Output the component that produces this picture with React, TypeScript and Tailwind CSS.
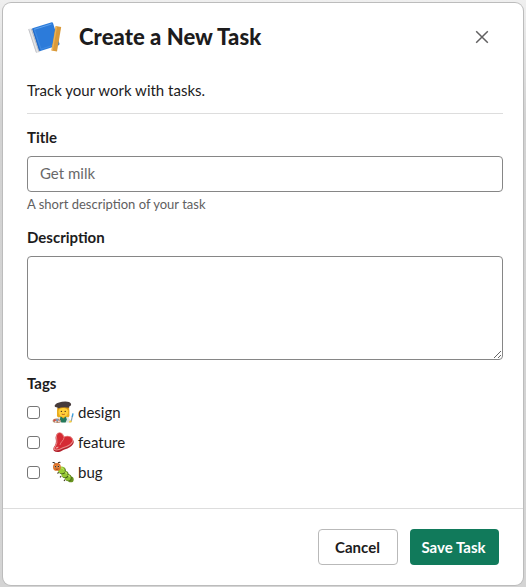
import type { ReactNode } from "react";

function NotebookIcon() {
  return (
    <svg viewBox="0 0 36 36" className="h-9 w-9 shrink-0">
      <path d="M1.4 10 L6 9 L13.6 32 L13 33 L9.6 34 Q9 33.8 8.6 32.6 Z" fill="#e2e3e6" />
      <path d="M1.7 10.2 L9.4 33.6" stroke="#bfc1c5" strokeWidth="0.9" />
      <path d="M4.4 10 L12 32.8" stroke="#a9acb3" strokeWidth="0.8" />
      <path d="M5.4 9.3 L24.8 3.3 Q25.7 3.2 26 4.1 L32.5 24.8 Q32.5 25.9 31.6 26.2 L13.4 32.1 Q12.5 32.2 12.1 31.2 Z" fill="#2c7bda" />
      <path d="M7.2 10.4 L24.6 5" fill="none" stroke="#66a7ee" strokeWidth="0.9" />
      <path d="M7.4 10.5 L14 30.2 L29.4 25.2" fill="none" stroke="#4a93e6" strokeWidth="0.6" />
      <path d="M5.6 9.8 L12.7 31.6" stroke="#1d61bd" strokeWidth="0.9" />
      <path d="M28.6 6.9 L34.2 7.9 L30 32.4 L24.4 31.6 Z" fill="#d99a3b" />
      <path d="M29.5 7.4 L25.3 31.4" stroke="#edb357" strokeWidth="1.2" />
    </svg>
  );
}

function ArtistIcon() {
  return (
    <svg viewBox="0 0 22 22" className="h-[22px] w-[22px]">
      <path d="M5.6 6 H17 Q17.6 10 17.4 13 Q18 15.6 16.4 16.4 H6 Q4.4 15.6 5 13 Q4.6 9 5.6 6 Z" fill="#e9ab1e" />
      <path d="M3.6 21.6 Q4 17.2 8 16 H14.6 Q18.4 17 19 21.6 Z" fill="#dfe3e1" />
      <path d="M8.4 15.8 H14 L14.8 18.4 L13.6 21.6 H9.4 L8 18.4 Z" fill="#23795a" />
      <path d="M9.8 14 H12.8 V16.2 L11.3 17.6 L9.8 16.2 Z" fill="#e8ae20" />
      <ellipse cx="11.3" cy="10.8" rx="4.8" ry="5.1" fill="#ffd03a" />
      <path d="M6.2 9 Q8.5 6.6 11.3 7 Q14 6.6 16.4 9 L16.2 5.4 H6.2 Z" fill="#d39212" />
      <circle cx="9.4" cy="10.4" r="0.7" fill="#4f3518" />
      <circle cx="13.2" cy="10.4" r="0.7" fill="#4f3518" />
      <path d="M9.7 13.1 Q11.3 14 12.9 13.1" stroke="#b0541a" strokeWidth="0.9" fill="none" />
      <path d="M2.6 4.8 Q3.4 2 10 0.8 Q17.4 -0.2 19 2.8 Q19.6 4.8 17.2 5.6 V6.8 Q11.2 5.4 5.6 7.4 V6.4 Q2.6 6.4 2.6 4.8 Z" fill="#463b3b" />
      <path d="M0.6 19.6 Q1.4 17.4 4.6 17.6 Q8.6 18 8.8 20.4 Q8.4 22 4.6 22 Q0.4 22 0.6 19.6 Z" fill="#b78a6c" />
      <circle cx="2.6" cy="19.2" r="1" fill="#e04444" />
      <circle cx="5.2" cy="19" r="0.9" fill="#5b9be0" />
      <circle cx="3.8" cy="20.9" r="0.8" fill="#eee" />
      <circle cx="6.9" cy="20.4" r="0.9" fill="#e8dbe0" />
      <path d="M19 21 L20.4 15" stroke="#8da3b3" strokeWidth="1.2" />
      <path d="M20.3 15.8 L21 12.4" stroke="#3a9ddc" strokeWidth="1.4" />
      <path d="M17.2 20.4 Q18.4 18.6 19.8 20 L19.2 21.6 H16.8 Z" fill="#ffd03a" />
    </svg>
  );
}

function MeatIcon() {
  return (
    <svg viewBox="0 0 22 22" className="h-[22px] w-[22px]">
      <path d="M5.4 2.4 Q8.6 0.6 10.8 3.4 L12.2 5.8 Q15 4.6 18.4 5.8 Q22.4 8.4 21.6 12 Q20.4 15.4 15.4 17.4 Q11.6 18.4 8.6 20.4 Q4.4 21.8 1.8 19.8 Q0.6 17.6 2.6 15 Q4.4 13 3.8 8.5 Q3 4.4 5.4 2.4 Z" fill="#b3202b" />
      <path d="M5.4 1.9 Q8.6 0.1 10.8 2.8 L12.4 5.4 Q15 4 18.4 5.2 Q22 7.6 21 11 Q19.6 14.2 15 15.9 Q11 17 8 18.8 Q4 20.4 1.9 18.8 Q1.2 16.8 3.2 14.5 Q5 12 4.2 8 Q3.4 3.9 5.4 1.9 Z" fill="#e98a87" />
      <path d="M6 2.6 Q8.4 1.2 10.1 3.5 L12 6.6 Q15 5 18 6 Q21 8 20.2 10.6 Q18.8 13.4 14.5 15 Q10.4 16 7.7 17.7 Q4.4 19.1 2.8 18 Q2.4 16.9 4.1 14.9 Q6 12 5.2 8 Q4.4 4.2 6 2.6 Z" fill="#d52b34" />
      <path d="M12 6.4 Q12 8.4 10 10.4 Q8.4 12 8 14" stroke="#ec8583" strokeWidth="0.9" fill="none" />
      <path d="M3.4 17.2 Q4.8 15.4 6.6 15.8 Q6.4 17.2 4.6 17.6 Z" fill="#f1a5a2" />
    </svg>
  );
}

function BugIcon() {
  return (
    <svg viewBox="0 0 22 22" className="h-[22px] w-[22px]">
      <path d="M3.4 2.8 Q2.4 1 0.6 1.6 M6 2.6 Q6.6 0.8 8.4 1.4" stroke="#2c241d" strokeWidth="1.1" fill="none" />
      <path d="M6.6 11 L5.6 12.6 M9.2 15 L8 16.4 M13 18.6 L12 20" stroke="#403420" strokeWidth="1.1" />
      <ellipse cx="18.8" cy="18.4" rx="2.9" ry="2.9" fill="#66921d" />
      <ellipse cx="16.4" cy="16.8" rx="3.2" ry="3.4" fill="#3f5c17" />
      <ellipse cx="15.8" cy="16.4" rx="3" ry="3.3" fill="#8fc032" />
      <ellipse cx="13.2" cy="13.6" rx="3.4" ry="3.6" fill="#3f5c17" />
      <ellipse cx="12.5" cy="13.1" rx="3.2" ry="3.4" fill="#95c736" />
      <ellipse cx="10.2" cy="9.6" rx="3.6" ry="3.7" fill="#3f5c17" />
      <ellipse cx="9.5" cy="9" rx="3.4" ry="3.5" fill="#99cc35" />
      <path d="M9 6.9 Q11.2 7 11.6 8.8 M12.4 10.8 Q14.4 11 14.7 12.8 M15.6 14.4 Q17.4 14.6 17.8 16.2" stroke="#c4e46a" strokeWidth="1" fill="none" />
      <circle cx="4.9" cy="5.9" r="3.9" fill="#de7429" />
      <circle cx="3.3" cy="5.7" r="1" fill="#f9d9b0" />
      <circle cx="6.4" cy="5.4" r="1" fill="#f9d9b0" />
      <circle cx="3.4" cy="5.7" r="0.75" fill="#291d18" />
      <circle cx="6.3" cy="5.4" r="0.75" fill="#291d18" />
      <path d="M3.7 8.1 Q5 8.9 6.4 7.8" stroke="#8a2c13" strokeWidth="0.7" fill="none" />
    </svg>
  );
}

function TagOption({ icon, name }: { icon: ReactNode; name: string }) {
  return (
    <label className="flex h-[30px] items-center">
      <input
        type="checkbox"
        className="h-[13px] w-[13px] appearance-none rounded-[3px] border border-[#767676] bg-white"
      />
      <span className="ml-3 flex items-center gap-1">
        {icon}
        <span>{name}</span>
      </span>
    </label>
  );
}

export default function App() {
  return (
    <div className="h-[587px] w-[526px] bg-linear-to-b from-[#efefef] via-[#d2d2d2] via-20% to-[#d4d4d4] p-[3px] font-['Lato',sans-serif] text-[15px] leading-[22px] text-[#1d1c1d]">
      <div className="flex h-[582px] w-[520px] flex-col rounded-lg bg-white shadow-[0_0_0_1px_#bcbcbc]">
        <header className="flex h-[68px] items-center pr-5 pl-6">
          <NotebookIcon />
          <h1 className="ml-4 flex-1 text-[22px] leading-[30px] font-black tracking-[0.06px]">Create a New Task</h1>
          <button type="button" aria-label="Close" className="flex h-9 w-[42px] items-center justify-center">
            <svg viewBox="0 0 14 14" className="h-3.5 w-3.5" fill="none" stroke="#616061" strokeWidth="1.5">
              <path d="M1.2 1.2 L12.8 12.8 M12.8 1.2 L1.2 12.8" />
            </svg>
          </button>
        </header>

        <main className="flex flex-1 flex-col pt-1 pr-5 pl-6">
          <p className="h-[39px] border-b border-[#dddddd] pt-1">Track your work with tasks.</p>
          <label htmlFor="title" className="mt-3 h-[30px] font-bold">Title</label>
          <input
            id="title"
            placeholder="Get milk"
            className="h-9 rounded border border-[#868686] px-3 pb-0.5 placeholder:text-[#696969]"
          />
          <p className="mt-0.5 h-5 text-[13px] leading-5 text-[#616061]">A short description of your task</p>
          <label htmlFor="description" className="mt-3 h-[30px] font-bold">Description</label>
          <textarea id="description" className="h-[104px] resize rounded border border-[#868686]" />
          <h2 className="mt-3 h-[25px] font-bold">Tags</h2>
          <div>
            <TagOption icon={<ArtistIcon />} name="design" />
            <TagOption icon={<MeatIcon />} name="feature" />
            <TagOption icon={<BugIcon />} name="bug" />
          </div>
        </main>

        <footer className="flex h-[77px] items-start justify-end gap-3 border-t border-[#dddddd] pt-5 pr-6">
          <button type="button" className="h-9 w-20 rounded border border-[#b9b9b9] pr-px font-bold">Cancel</button>
          <button type="button" className="h-9 w-[89px] rounded bg-[#117a5b] pr-0.5 font-bold text-white">Save Task</button>
        </footer>
      </div>
    </div>
  );
}
